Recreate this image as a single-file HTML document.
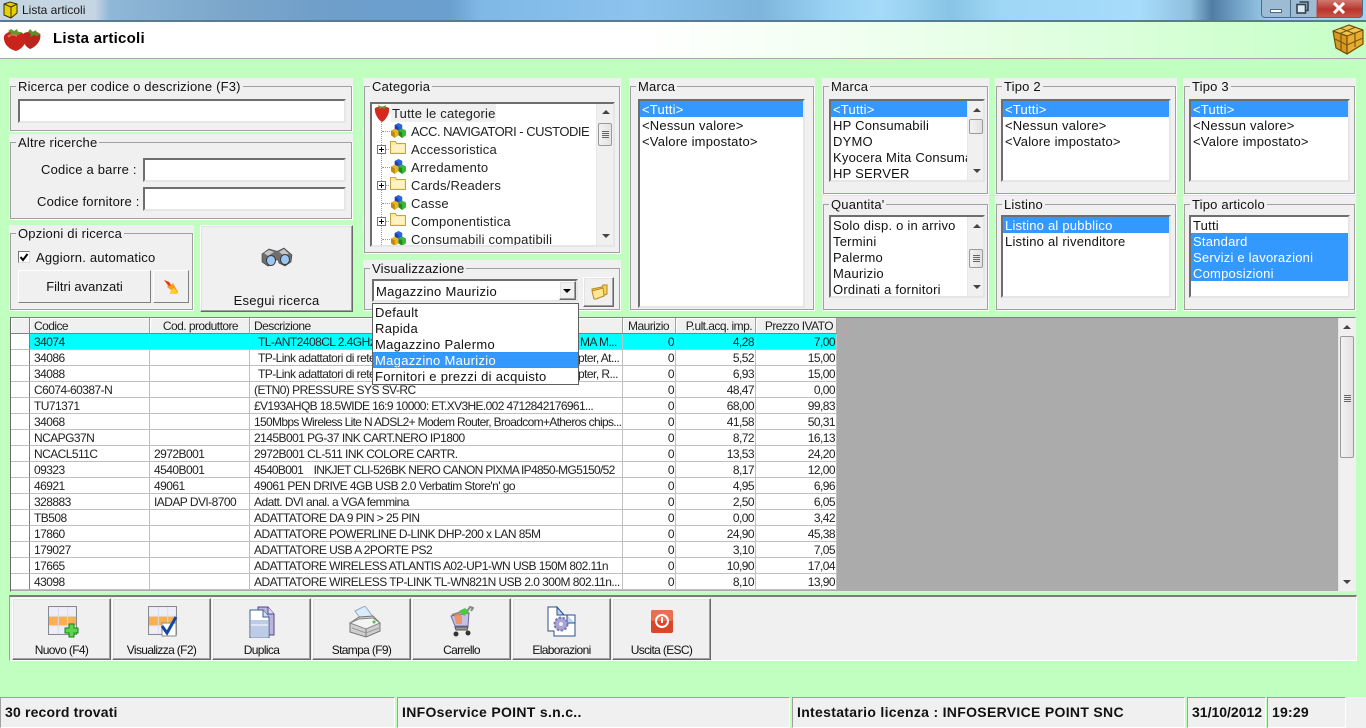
<!DOCTYPE html>
<html lang="it"><head><meta charset="utf-8"><title>Lista articoli</title>
<style>
*{box-sizing:border-box}
html,body{margin:0;padding:0;width:1366px;height:728px;overflow:hidden;background:#c0ffc0;font-family:"Liberation Sans",Arial,sans-serif;font-size:13px;color:#000}
.a{position:absolute;white-space:nowrap}
#tb{left:0;top:0;width:1366px;height:20px;background:linear-gradient(90deg,#c5d5e2 0,#c5d5e2 95px,#8fb7d6 110px,#7ba6cb 230px,#6f9fca 320px,#6a9fd0 450px,#7fb8e6 480px,#8cc4ee 640px,#7fb5dc 760px,#98d2f4 830px,#a6daf9 880px,#9fd5f4 900px,#88c4e6 950px,#9fd6f6 1000px,#a7dcfa 1140px,#8fc0de 1190px,#4f7da3 1212px,#6f9fc4 1235px,#9fcdec 1270px,#a3d3f2 1366px)}
#tl{left:0;top:20px;width:1366px;height:2px;background:#5a7a94}
#hd{left:0;top:21px;width:1366px;height:38px;background:linear-gradient(90deg,#fff 0,#fff 640px,#f0fff0 860px,#c6ffc6 1366px);border-bottom:1px solid #a8a8a8;border-top:1px solid #5a7a94}
.g{position:absolute;background:#f0f0f0}
.g:before{content:"";position:absolute;left:1px;right:1px;top:8px;bottom:1px;border:1px solid #a0a0a0;box-shadow:1px 1px 0 #fff}
.g>b{position:absolute;left:7px;top:1px;padding:0 2px;background:#f0f0f0;font-weight:normal;line-height:15px;white-space:nowrap;letter-spacing:.2px;color:#111}
.in{position:absolute;background:#fff;border:2px solid;border-color:#6e6e6e #e6e6e6 #e6e6e6 #6e6e6e;overflow:hidden}
.li{line-height:18px;height:16px;padding-left:2px;white-space:nowrap;overflow:hidden;letter-spacing:.22px;color:#111}
.li.s{background:#3399ff;color:#fff}
.btn{position:absolute;background:#f0f0f0;border:1px solid;border-color:#fff #696969 #696969 #fff;box-shadow:inset -1px -1px #a0a0a0,inset 1px 1px #e3e3e3;text-align:center}
.sb{position:absolute;top:0;bottom:0;right:0;width:16px;background:#f0f0f0;border-left:1px solid #e8e8e8}
.up,.dn{position:absolute;left:5px;width:0;height:0;border-left:4px solid transparent;border-right:4px solid transparent}
.up{border-bottom:4px solid #444}.dn{border-top:4px solid #444}
.th{position:absolute;left:1px;width:14px;background:linear-gradient(90deg,#f2f2f2,#e2e2e2);border:1px solid #9a9a9a;border-radius:2px}
.grip{position:absolute;left:3px;width:7px;height:1px;background:#666;box-shadow:0 2px #666,0 4px #666,0 6px #666}
.t{position:absolute;left:20px;white-space:nowrap;line-height:20px;letter-spacing:.2px;color:#222}
.tree{position:absolute;left:0;top:0}
table{position:absolute;left:11px;top:318px;width:826px;table-layout:fixed;border-collapse:separate;border-spacing:0;font-size:12px;letter-spacing:-.55px;background:#fff}
th{height:16px;background:#f0f0f0;font-weight:normal;border-right:1px solid #a0a0a0;border-bottom:1px solid #808080;box-shadow:inset 1px 1px #fff;padding:1px 0 0 4px;text-align:left;line-height:14px;white-space:nowrap;overflow:hidden;color:#222}
td{height:16px;padding:1px 2px 0 4px;border-right:1px solid #c0c0c0;border-bottom:1px solid #c0c0c0;line-height:14px;white-space:nowrap;overflow:hidden;background:#fff;color:#222}
td.n{text-align:right;padding-right:1px}
td.r,th.r{border-right:1px solid #808080;padding:0}
tr.c td{background:#0ff}tr.c td.r{background:#fff}
th.c{text-align:center;padding:1px 0 0 2px}
th.h{text-align:right;padding:1px 3px 0 0}
.o{position:absolute;font-size:12px;letter-spacing:-.55px;line-height:14px;white-space:nowrap;color:#222}
.tool{position:absolute;top:598px;width:99px;height:62px;font-size:12px;letter-spacing:-.65px;line-height:14px;color:#111}
.tool span{position:absolute;left:0;right:0;top:44px}
.tool svg{position:absolute;left:35px;top:7px}
.st{position:absolute;top:697px;height:31px;background:#f0f0f0;border:1px solid;border-color:#a0a0a0 #fff #fff #a0a0a0;line-height:29px;padding-left:4px;white-space:nowrap;font-weight:bold;font-size:14px;letter-spacing:.31px;color:#111}
</style></head><body>
<svg width="0" height="0" style="position:absolute"><defs>
<symbol id="blocks" viewBox="0 0 16 16"><path d="M4 2l4-2 4 2v5l-4 2-4-2z" fill="#2f62e0"/><path d="M4 2l4 2v5L4 7z" fill="#1c3fa8"/><path d="M0 8l4-2 4 2v5l-4 3-4-3z" fill="#eab422"/><path d="M0 8l4 2v6l-4-3z" fill="#c08810"/><path d="M8 8l4-2 4 2v5l-4 3-4-3z" fill="#36bc34"/><path d="M8 8l4 2v6l-4-3z" fill="#1f8a1f"/></symbol>
<symbol id="fold" viewBox="0 0 16 14"><path d="M.5 3.500V1.500h5l1 2h9v10H.5z" fill="#ffe9a0" stroke="#c4a44a"/><path d="M2 5h12v7H2z" fill="#fff2c4"/></symbol>
<symbol id="plus" viewBox="0 0 9 9"><rect x=".5" y=".5" width="8" height="8" fill="#fff" stroke="#777"/><path d="M2 4.500h5M4.500 2v5" stroke="#000"/></symbol>
<symbol id="grid" viewBox="0 0 28 28"><rect x=".5" y=".5" width="27" height="27" fill="#eeeefa"/><rect x="1" y="10" width="26" height="9" fill="#f9b050"/><path d="M10 1v26M19 1v26" stroke="#dcdcec"/><path d="M1 10h26M1 19h26" stroke="#e4d8c8"/><rect x=".5" y=".5" width="27" height="27" fill="none" stroke="#8a8a8a"/></symbol>
</defs></svg>

<div class="a" id="tb"></div><div class="a" id="tl"></div>
<svg class="a" style="left:1px;top:1px" width="18" height="18" viewBox="0 0 18 18"><path d="M3 3l6-2 7 2v9l-6 5-7-3z" fill="#e6d000" stroke="#3a3408"/><path d="M3 3l7 3v11" fill="none" stroke="#3a3408"/><path d="M10 6l6-3" stroke="#3a3408"/></svg>
<div class="a" style="left:22px;top:3px;font-size:12px;line-height:15px;color:#1a1a1a">Lista articoli</div>
<div class="a" style="left:1261px;top:0;width:102px;height:18px;border:1px solid #4d6a80;border-top:0;border-radius:0 0 4px 4px;background:linear-gradient(90deg,#9dbcd4 0,#9dbcd4 54px,transparent 55px),linear-gradient(180deg,#cf7a70,#b8352d 55%,#c8554a);overflow:hidden">
<div style="position:absolute;left:8px;top:9px;width:12px;height:4px;background:#fff;border:1px solid #4d6a80"></div>
<div style="position:absolute;left:28px;top:0;width:1px;height:18px;background:#4d6a80"></div>
<div style="position:absolute;left:55px;top:0;width:1px;height:18px;background:#4d6a80"></div>
<svg style="position:absolute;left:34px;top:1px" width="13" height="13" viewBox="0 0 13 13"><path d="M3.500 1h8.500v8.500h-2" fill="none" stroke="#33414d" stroke-width="1.600"/><rect x="1" y="3.500" width="8.500" height="8.500" fill="#dfe9f0" stroke="#33414d" stroke-width="1.600"/></svg>
<svg style="position:absolute;left:70px;top:2px" width="14" height="12" viewBox="0 0 14 12"><path d="M2 1l10 10M12 1L2 11" stroke="#fff" stroke-width="3"/></svg>
</div>

<div class="a" id="hd"></div>
<svg class="a" style="left:4px;top:26px" width="38" height="26" viewBox="0 0 38 26"><path d="M20 7c5-2 14-2 16 1 2 6-4 13-10 15-6-3-8-9-6-16z" fill="#b8261e"/><path d="M0 10c3-6 14-6 20-2 4 5 1 14-8 17C4 23-1 17 0 10z" fill="#c8241c"/><path d="M4 11c3-3 6-3 9-1" stroke="#ea6a56" stroke-width="2" fill="none"/><path d="M7 3l3 2 3-2 1 3 4 0-3 3-5-1-4 2 1-3-3-2z" fill="#5f9a2b"/><path d="M26 3l3 3 3-2 1 3 4 1-4 2-3-1-4 2 1-3-3-2z" fill="#5c8f2a"/></svg>
<div class="a" style="left:53px;top:30px;font-size:15px;font-weight:bold;line-height:18px;letter-spacing:.25px">Lista articoli</div>
<svg class="a" style="left:1332px;top:23px" width="32" height="32" viewBox="0 0 32 32"><path d="M1 8l16-6 14 5-16 6z" fill="#f3c550"/><path d="M1 8l14 5v18L4 25z" fill="#d9981e"/><path d="M15 13l16-6v14L15 31z" fill="#e8ac30"/><path d="M1 8l16-6 14 5v14L15 31 4 25zM1 8l14 5 16-6M15 13v18" fill="none" stroke="#6e4e0c" stroke-width="1.200"/><path d="M3 16l12 6 16-7M8 5l15 6v13M24 4 9 10v18" fill="none" stroke="#7a5a12" stroke-width="1.200"/></svg>

<!-- Search -->
<div class="g" style="left:9px;top:78px;width:344px;height:54px"><b>Ricerca per codice o descrizione (F3)</b>
<div class="in" style="left:9px;top:21px;width:328px;height:24px"></div></div>
<div class="g" style="left:9px;top:134px;width:344px;height:86px"><b>Altre ricerche</b>
<div class="a" style="left:32px;top:28px;line-height:16px;letter-spacing:.2px;color:#111">Codice a barre :</div>
<div class="a" style="left:28px;top:60px;line-height:16px;letter-spacing:.2px;color:#111">Codice fornitore :</div>
<div class="in" style="left:134px;top:24px;width:203px;height:24px"></div>
<div class="in" style="left:134px;top:53px;width:203px;height:24px"></div></div>
<div class="g" style="left:9px;top:225px;width:185px;height:86px"><b>Opzioni di ricerca</b>
<div class="a" style="left:9px;top:26px;width:12px;height:12px;background:#fff;border:1px solid;border-color:#777 #ddd #ddd #777"><svg width="10" height="10" viewBox="0 0 10 10" style="display:block"><path d="M1.500 5l2.500 3 4.500-6" stroke="#000" stroke-width="2" fill="none"/></svg></div>
<div class="a" style="left:27px;top:25px;line-height:16px;letter-spacing:.2px;color:#111">Aggiorn. automatico</div>
<div class="btn" style="left:9px;top:45px;width:133px;height:33px;line-height:31px;color:#111;border-color:#fff #808080 #808080 #fff;box-shadow:none">Filtri avanzati</div>
<div class="btn" style="left:144px;top:45px;width:36px;height:33px;border-color:#fff #808080 #808080 #fff;box-shadow:none"><svg style="position:absolute;left:9px;top:8px" width="16" height="15" viewBox="0 0 16 15"><path d="M1 1l5 2 2 3 2-2 5 9-1 2H7L8 11 4 8 5 7z" fill="#ff9a1a"/><path d="M1 1l5 2 2 3-2 1z" fill="#e8341a"/><path d="M8 11l3-2 3 4v2H7z" fill="#ffd21a"/></svg></div></div>
<div class="btn" style="left:200px;top:225px;width:153px;height:87px">
<svg style="position:absolute;left:60px;top:21px" width="32" height="20" viewBox="0 0 32 20"><path d="M1 7l7-5 7 2h2l6-3 8 7-1 7-6 4-6-3-1-3h-2l-2 4-6 2-6-4z" fill="#6e6e6e" stroke="#3a3a3a" stroke-width=".6"/><path d="M3 6l5-3 5 2-6 4z" fill="#c4c4c4"/><path d="M18 5l5-3 5 5-6 1z" fill="#c4c4c4"/><ellipse cx="10" cy="13.500" rx="4.500" ry="5" fill="#9cc7f5" stroke="#3a3a3a"/><ellipse cx="24" cy="12.500" rx="4.500" ry="5" fill="#9cc7f5" stroke="#3a3a3a"/></svg>
<span style="position:absolute;left:0;right:0;top:67px;line-height:16px;letter-spacing:.25px;color:#111">Esegui ricerca</span></div>

<!-- Categoria -->
<div class="g" style="left:363px;top:78px;width:258px;height:176px"><b>Categoria</b>
<div class="in" style="left:7px;top:24px;width:245px;height:145px">
<div style="position:absolute;left:0;top:0;right:16px;bottom:0;overflow:hidden">
<div style="position:absolute;left:9px;top:13px;width:1px;height:130px;border-left:1px dotted #999"></div>
<div style="position:absolute;left:19px;top:0;width:105px;height:18px;background:#f0f0f0"></div>
<svg class="tree" style="left:2px;top:0" width="16" height="18" viewBox="0 0 16 18"><path d="M1 4c3-2 11-2 14 0 1 5-3 12-7 14C4 16 0 9 1 4z" fill="#d5281f"/><path d="M4 1l4 2 4-2-1 4-3-1-3 1z" fill="#5f9a2b"/></svg>
<div class="t" style="top:0">Tutte le categorie</div>
<div style="position:absolute;left:10px;top:27px;width:10px;border-top:1px dotted #999"></div><svg class="tree" style="left:19px;top:19px" width="15" height="15"><use href="#blocks"/></svg><div class="t" style="left:39px;top:18px;letter-spacing:-.5px">ACC. NAVIGATORI - CUSTODIE</div>
<svg class="tree" style="left:5px;top:41px" width="9" height="9"><use href="#plus"/></svg><div style="position:absolute;left:14px;top:45px;width:5px;border-top:1px dotted #999"></div><svg class="tree" style="left:18px;top:36px" width="16" height="14"><use href="#fold"/></svg><div class="t" style="left:39px;top:36px">Accessoristica</div>
<div style="position:absolute;left:10px;top:63px;width:10px;border-top:1px dotted #999"></div><svg class="tree" style="left:19px;top:55px" width="15" height="15"><use href="#blocks"/></svg><div class="t" style="left:39px;top:54px">Arredamento</div>
<svg class="tree" style="left:5px;top:77px" width="9" height="9"><use href="#plus"/></svg><div style="position:absolute;left:14px;top:81px;width:5px;border-top:1px dotted #999"></div><svg class="tree" style="left:18px;top:72px" width="16" height="14"><use href="#fold"/></svg><div class="t" style="left:39px;top:72px">Cards/Readers</div>
<div style="position:absolute;left:10px;top:99px;width:10px;border-top:1px dotted #999"></div><svg class="tree" style="left:19px;top:91px" width="15" height="15"><use href="#blocks"/></svg><div class="t" style="left:39px;top:90px">Casse</div>
<svg class="tree" style="left:5px;top:113px" width="9" height="9"><use href="#plus"/></svg><div style="position:absolute;left:14px;top:117px;width:5px;border-top:1px dotted #999"></div><svg class="tree" style="left:18px;top:108px" width="16" height="14"><use href="#fold"/></svg><div class="t" style="left:39px;top:108px">Componentistica</div>
<div style="position:absolute;left:10px;top:135px;width:10px;border-top:1px dotted #999"></div><svg class="tree" style="left:19px;top:127px" width="15" height="15"><use href="#blocks"/></svg><div class="t" style="left:39px;top:126px">Consumabili compatibili</div>
</div>
<div class="sb" style="width:17px"><div class="up" style="top:6px"></div><div class="th" style="top:19px;height:23px"><div class="grip" style="top:7px"></div></div><div class="dn" style="bottom:7px"></div></div>
</div></div>

<!-- Visualizzazione -->
<div class="g" style="left:363px;top:260px;width:258px;height:51px"><b>Visualizzazione</b>
<div class="in" style="left:9px;top:19px;width:206px;height:23px"><span style="position:absolute;left:2px;top:3px;line-height:16px;letter-spacing:.3px;color:#111">Magazzino Maurizio</span>
<div class="btn" style="right:0;top:0;bottom:0;width:17px;position:absolute"><div class="dn" style="left:3px;top:7px;border-top-color:#000"></div></div></div>
<div class="btn" style="left:220px;top:17px;width:31px;height:30px"><svg style="position:absolute;left:7px;top:6px" width="17" height="16" viewBox="0 0 17 16"><path d="M1 5l10-2 1-2 4 0v9l-11 5H3z" fill="#f7cf5a" stroke="#b58a22"/><path d="M1 7l11-3 1 8-8 3H3z" fill="#ffe692" stroke="#b58a22"/></svg></div></div>

<!-- Marca 1 -->
<div class="g" style="left:629px;top:78px;width:186px;height:233px"><b>Marca</b>
<div class="in" style="left:9px;top:21px;width:167px;height:209px"><div class="li s">&lt;Tutti&gt;</div><div class="li">&lt;Nessun valore&gt;</div><div class="li">&lt;Valore impostato&gt;</div></div></div>

<!-- Row 1 right -->
<div class="g" style="left:822px;top:78px;width:167px;height:117px"><b>Marca</b>
<div class="in" style="left:7px;top:21px;width:156px;height:83px"><div class="li s" style="margin-right:16px">&lt;Tutti&gt;</div><div class="li">HP Consumabili</div><div class="li">DYMO</div><div class="li" style="width:137px">Kyocera Mita Consumabili</div><div class="li">HP SERVER</div>
<div class="sb"><div class="up" style="top:7px"></div><div class="th" style="top:18px;height:15px"></div><div class="dn" style="bottom:7px"></div></div></div></div>
<div class="g" style="left:995px;top:78px;width:182px;height:117px"><b>Tipo 2</b>
<div class="in" style="left:6px;top:21px;width:170px;height:83px"><div class="li s">&lt;Tutti&gt;</div><div class="li">&lt;Nessun valore&gt;</div><div class="li">&lt;Valore impostato&gt;</div></div></div>
<div class="g" style="left:1183px;top:78px;width:173px;height:117px"><b>Tipo 3</b>
<div class="in" style="left:6px;top:21px;width:161px;height:83px"><div class="li s">&lt;Tutti&gt;</div><div class="li">&lt;Nessun valore&gt;</div><div class="li">&lt;Valore impostato&gt;</div></div></div>

<!-- Row 2 right -->
<div class="g" style="left:822px;top:196px;width:167px;height:115px"><b>Quantita'</b>
<div class="in" style="left:7px;top:19px;width:156px;height:83px"><div class="li">Solo disp. o in arrivo</div><div class="li">Termini</div><div class="li">Palermo</div><div class="li">Maurizio</div><div class="li">Ordinati a fornitori</div>
<div class="sb"><div class="up" style="top:7px"></div><div class="th" style="top:32px;height:19px"><div class="grip" style="top:5px"></div></div><div class="dn" style="bottom:7px"></div></div></div></div>
<div class="g" style="left:995px;top:196px;width:182px;height:115px"><b>Listino</b>
<div class="in" style="left:6px;top:19px;width:170px;height:83px"><div class="li s">Listino al pubblico</div><div class="li">Listino al rivenditore</div></div></div>
<div class="g" style="left:1183px;top:196px;width:173px;height:115px"><b>Tipo articolo</b>
<div class="in" style="left:6px;top:19px;width:161px;height:83px"><div class="li">Tutti</div><div class="li s">Standard</div><div class="li s">Servizi e lavorazioni</div><div class="li s">Composizioni</div></div></div>

<!-- Grid -->
<div class="a" style="left:10px;top:317px;width:1346px;height:275px;background:#ababab;border:1px solid;border-color:#808080 #f0f0f0 #e8e8e8 #696969"></div>
<table><colgroup><col style="width:19px"><col style="width:120px"><col style="width:100px"><col style="width:373px"><col style="width:53px"><col style="width:80px"><col style="width:81px"></colgroup>
<tr><th class="r"></th><th>Codice</th><th class="c">Cod. produttore</th><th>Descrizione</th><th class="h" style="padding-right:6px">Maurizio</th><th class="h">P.ult.acq. imp.</th><th class="h">Prezzo IVATO</th></tr>
<tr class="c"><td class="r"></td><td>34074</td><td></td><td style="padding-left:8px">TL-ANT2408CL 2.4GHz</td><td class="n">0</td><td class="n">4,28</td><td class="n">7,00</td></tr>
<tr><td class="r"></td><td>34086</td><td></td><td style="padding-left:8px">TP-Link adattatori di rete</td><td class="n">0</td><td class="n">5,52</td><td class="n">15,00</td></tr>
<tr><td class="r"></td><td>34088</td><td></td><td style="padding-left:8px">TP-Link adattatori di rete</td><td class="n">0</td><td class="n">6,93</td><td class="n">15,00</td></tr>
<tr><td class="r"></td><td>C6074-60387-N</td><td></td><td>(ETN0) PRESSURE SYS SV-RC</td><td class="n">0</td><td class="n">48,47</td><td class="n">0,00</td></tr>
<tr><td class="r"></td><td>TU71371</td><td></td><td style="letter-spacing:-.63px">£V193AHQB 18.5WIDE 16:9 10000: ET.XV3HE.002 4712842176961...</td><td class="n">0</td><td class="n">68,00</td><td class="n">99,83</td></tr>
<tr><td class="r"></td><td>34068</td><td></td><td style="letter-spacing:-.67px">150Mbps Wireless Lite N ADSL2+ Modem Router, Broadcom+Atheros chips...</td><td class="n">0</td><td class="n">41,58</td><td class="n">50,31</td></tr>
<tr><td class="r"></td><td>NCAPG37N</td><td></td><td>2145B001 PG-37 INK CART.NERO IP1800</td><td class="n">0</td><td class="n">8,72</td><td class="n">16,13</td></tr>
<tr><td class="r"></td><td>NCACL511C</td><td>2972B001</td><td>2972B001 CL-511 INK COLORE CARTR.</td><td class="n">0</td><td class="n">13,53</td><td class="n">24,20</td></tr>
<tr><td class="r"></td><td>09323</td><td>4540B001</td><td style="letter-spacing:-.7px">4540B001 &nbsp; &nbsp;INKJET CLI-526BK NERO CANON PIXMA IP4850-MG5150/52</td><td class="n">0</td><td class="n">8,17</td><td class="n">12,00</td></tr>
<tr><td class="r"></td><td>46921</td><td>49061</td><td>49061 PEN DRIVE 4GB USB 2.0 Verbatim Store'n' go</td><td class="n">0</td><td class="n">4,95</td><td class="n">6,96</td></tr>
<tr><td class="r"></td><td>328883</td><td>IADAP DVI-8700</td><td>Adatt. DVI anal. a VGA femmina</td><td class="n">0</td><td class="n">2,50</td><td class="n">6,05</td></tr>
<tr><td class="r"></td><td>TB508</td><td></td><td>ADATTATORE DA 9 PIN &gt; 25 PIN</td><td class="n">0</td><td class="n">0,00</td><td class="n">3,42</td></tr>
<tr><td class="r"></td><td>17860</td><td></td><td>ADATTATORE POWERLINE D-LINK DHP-200 x LAN 85M</td><td class="n">0</td><td class="n">24,90</td><td class="n">45,38</td></tr>
<tr><td class="r"></td><td>179027</td><td></td><td>ADATTATORE USB A 2PORTE PS2</td><td class="n">0</td><td class="n">3,10</td><td class="n">7,05</td></tr>
<tr><td class="r"></td><td>17665</td><td></td><td>ADATTATORE WIRELESS ATLANTIS A02-UP1-WN USB 150M 802.11n</td><td class="n">0</td><td class="n">10,90</td><td class="n">17,04</td></tr>
<tr><td class="r"></td><td>43098</td><td></td><td>ADATTATORE WIRELESS TP-LINK TL-WN821N USB 2.0 300M 802.11n...</td><td class="n">0</td><td class="n">8,10</td><td class="n">13,90</td></tr>
</table>
<div class="o" style="left:580px;top:335px">MA M...</div>
<div class="o" style="left:578px;top:351px">pter, At...</div>
<div class="o" style="left:578px;top:367px">pter, R...</div>
<!-- grid scrollbar -->
<div class="a" style="left:1338px;top:318px;width:17px;height:273px;background:#f0f0f0;border-left:1px solid #e4e4e4">
<div class="up" style="top:7px;left:4px"></div>
<div class="th" style="top:18px;height:122px;left:1px"><div class="grip" style="top:58px"></div></div>
<div class="dn" style="top:262px;left:4px"></div></div>

<!-- Dropdown -->
<div class="a" style="left:372px;top:303px;width:207px;height:82px;background:#fff;border:1px solid #5f5f5f;z-index:5;font-size:13px;letter-spacing:.3px;line-height:18px;color:#111">
<div style="padding-left:2px;height:16px">Default</div><div style="padding-left:2px;height:16px">Rapida</div><div style="padding-left:2px;height:16px">Magazzino Palermo</div>
<div style="padding-left:2px;height:16px;background:#3399ff;color:#fff;outline:1px dotted #c46a28;outline-offset:-1px">Magazzino Maurizio</div>
<div style="padding-left:2px;height:16px">Fornitori e prezzi di acquisto</div></div>

<!-- Toolbar -->
<div class="a" style="left:9px;top:595px;width:1348px;height:66px;background:#f0f0f0;border-top:2px solid #7c7c7c;border-left:1px solid #a0a0a0;border-right:1px solid #fff;border-bottom:1px solid #fff"></div>
<div class="btn tool" style="left:12px"><svg width="32" height="32" viewBox="0 0 32 32"><use href="#grid" width="29" height="29"/><path d="M17 22h4v-4h5v4h4v5h-4v4h-5v-4h-4z" fill="#5ed54a" stroke="#14801a"/></svg><span>Nuovo (F4)</span></div>
<div class="btn tool" style="left:112px"><svg width="32" height="32" viewBox="0 0 32 32"><use href="#grid" width="29" height="29"/><rect x="14" y="17" width="14" height="13" fill="#fff" stroke="#888"/><path d="M14 20l5 7 9-16" fill="none" stroke="#1246a8" stroke-width="3"/></svg><span>Visualizza (F2)</span></div>
<div class="btn tool" style="left:212px"><svg width="32" height="32" viewBox="0 0 32 32"><path d="M10 1h10l6 7v21H10z" fill="#bdb4dc" stroke="#54468f"/><path d="M20 1v7h6" fill="#e0dcf0" stroke="#54468f"/><path d="M2 4h13l6 7v21H2z" fill="#fff" stroke="#3d5c94"/><path d="M15 4v7h6" fill="#cfe0f5" stroke="#3d5c94"/><rect x="3" y="14" width="17" height="17" fill="#bccce6"/><path d="M3 19h17" stroke="#fff"/></svg><span>Duplica</span></div>
<div class="btn tool" style="left:312px"><svg width="34" height="32" viewBox="0 0 34 32"><path d="M7 5l10-5 9 12-11 4z" fill="#d8ebff" stroke="#9aaaba"/><path d="M2 17l9-6 14-1 7 7v8l-14 6-16-5z" fill="#cfcfcf" stroke="#777"/><path d="M2 17l16 6 14-6-7-5-14 1z" fill="#f4f4f4" stroke="#888"/><path d="M18 23v8" stroke="#777"/><path d="M4 22l14 5 13-5" stroke="#999" fill="none"/><circle cx="26" cy="16" r="1.500" fill="#4fc23c"/></svg><span>Stampa (F9)</span></div>
<div class="btn tool" style="left:412px"><svg style="left:37px;top:7px" width="24" height="31" viewBox="0 0 24 31"><path d="M2 9l16-5 2-3 3 1-2 3" fill="none" stroke="#888" stroke-width="2"/><path d="M1 10l18-3-1 13H5z" fill="#c6c0e4" stroke="#6c6a9a"/><path d="M9 5l6-3 4 4-5 4z" fill="#4ec83c"/><path d="M4 9l5-2 3 4v7H6z" fill="#f58a4e" fill-opacity=".8"/><path d="M5 21h13l-1 3H6z" fill="#999" stroke="#555"/><circle cx="6" cy="28" r="2.500" fill="#333"/><circle cx="18" cy="27" r="2.500" fill="#333"/></svg><span>Carrello</span></div>
<div class="btn tool" style="left:512px"><svg style="left:34px;top:7px" width="32" height="31" viewBox="0 0 32 31"><path d="M1 1h9l7 8h11v21H7V25H1z" fill="#fff" stroke="#2e4f8c"/><path d="M10 1v8h7z" fill="#bcd6f2" stroke="#2e4f8c"/><path d="M20 9v8h8" fill="#bcd6f2" stroke="#2e4f8c"/><circle cx="14" cy="18" r="6.500" fill="#a9a4d6" stroke="#7a76ae" stroke-width="2" stroke-dasharray="2.500 1.500"/><circle cx="14" cy="18" r="2" fill="#eee"/></svg><span>Elaborazioni</span></div>
<div class="btn tool" style="left:612px"><svg style="left:34px;top:7px" width="32" height="32" viewBox="0 0 32 32"><rect x="4" y="4" width="22" height="23" rx="2" fill="#d9462a"/><rect x="4" y="4" width="22" height="11" rx="2" fill="#ea6f4e"/><circle cx="15" cy="15" r="6" fill="none" stroke="#fff" stroke-width="2"/><path d="M15 11v6" stroke="#fff" stroke-width="2"/></svg><span>Uscita (ESC)</span></div>

<!-- Status -->
<div class="st" style="left:0;width:395px;letter-spacing:.17px">30 record trovati</div>
<div class="st" style="left:397px;width:393px">INFOservice POINT s.n.c..</div>
<div class="st" style="left:792px;width:393px">Intestatario licenza : INFOSERVICE POINT SNC</div>
<div class="st" style="left:1187px;width:79px;letter-spacing:0">31/10/2012</div>
<div class="st" style="left:1267px;width:79px;letter-spacing:.2px">19:29</div>
<div class="a" style="left:1346px;top:697px;width:20px;height:31px;background:#f0f0f0"></div>
</body></html>
